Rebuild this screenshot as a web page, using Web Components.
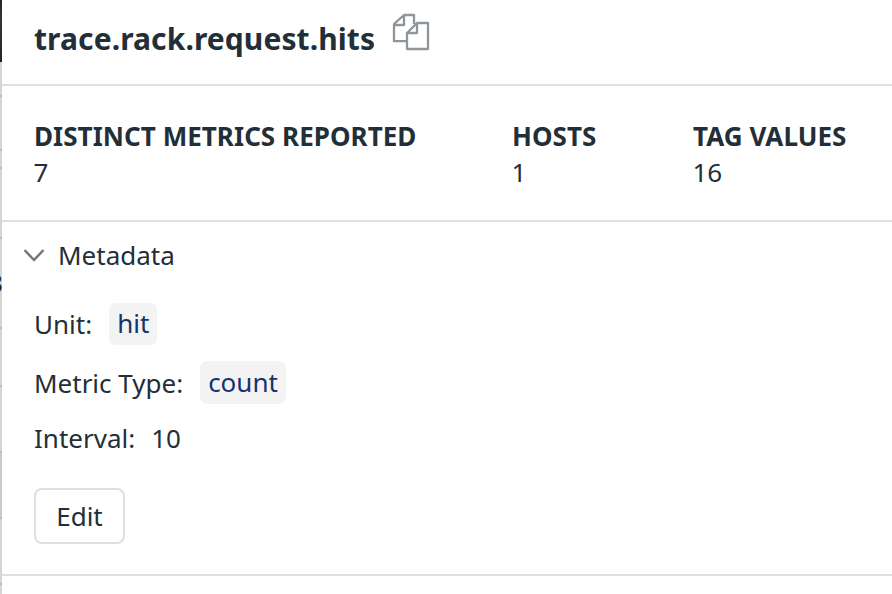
<!DOCTYPE html>
<html lang="en"><head><meta charset="utf-8"><title>Metric details</title>
<style>
html,body{margin:0;height:100%;overflow:hidden;background:#fff}
body{font:26px/36px "Noto Sans",sans-serif;color:#232f38}
</style></head><body>
<metric-app></metric-app>
<script>
const define=(name,html)=>customElements.define(name,class extends HTMLElement{
  constructor(){super();this.attachShadow({mode:'open'}).innerHTML=html}
});
define('page-edge',`<style>
:host{display:block;position:relative;overflow:hidden;width:2px;height:594px;background:#d4d4d4}
.dark{height:62px;background:linear-gradient(#242428,#343439 30%,#242428)}
i{position:absolute;left:0;width:2px;height:2px;background:#bcbcbf}
.sel{position:absolute;top:453px;width:2px;height:64px;background:#c5cdd2}
.num{position:absolute;top:265px;right:-.5px;font-weight:700;font-size:25px;color:#1b262e}
</style><div class="dark"></div><div class="sel"></div>
<i style="top:95px"></i><i style="top:149px"></i><i style="top:167px"></i><i style="top:237px"></i><i style="top:327px"></i><i style="top:385px"></i><i style="top:451px"></i><i style="top:517px"></i><i style="top:583px"></i>
<span class="num">3</span>`);
define('copy-icon',`<style>:host{display:block;width:38px;height:38px}svg{display:block}</style>
<svg width="38" height="38" fill="none" stroke="#8f969b" stroke-width="2.3" stroke-linejoin="round"><path d="M14 28.2H2V11L12 2H22V11M12 2V12H2M15 20L25 10H36V36H15ZM25 10V20H15"/></svg>`);
define('panel-header',`<style>
:host{display:flex;box-sizing:border-box;height:86px;padding:13px 0 0 32px;border-bottom:2px solid #dedee3}
h1{flex:none;width:341px;margin:6px 17px 0 0;font-size:30px;line-height:40px;font-weight:700;letter-spacing:.09px;white-space:nowrap}
</style><h1><slot></slot></h1><copy-icon></copy-icon>`);
define('metric-stat',`<style>:host{display:block;white-space:nowrap}b{display:block;font-weight:700;letter-spacing:.05px}.value{margin-left:-.5px}</style><b><slot name="label"></slot></b><div class="value"><slot></slot></div>`);
define('stat-row',`<style>:host{display:grid;grid-template-columns:478px 181px 1fr;box-sizing:border-box;height:136px;padding:32px 0 0 32px;border-bottom:2px solid #dedee3}</style><slot></slot>`);
define('section-title',`<style>:host{display:flex;align-items:center;padding-left:21px;gap:13px;height:36px}svg{display:block}</style>
<svg width="22" height="14" fill="none" stroke="#71787e" stroke-width="2.5"><path d="M1.5 2L11 12L20.5 2"/></svg><slot></slot>`);
define('value-tag',`<style>:host{display:block;box-sizing:border-box;height:42px;padding:2px 8px;border-radius:7px;background:#f3f3f4;color:#16336f}</style><slot></slot>`);
define('detail-row',`<style>:host{display:flex;height:42px;align-items:flex-start;gap:17px}span{padding-top:3px}</style><span><slot name="label"></slot></span><slot></slot>`);
define('edit-button',`<style>:host{display:block;width:91px;height:56px}button{display:block;width:91px;height:56px;margin:0;padding:0;border:2px solid #dedee3;border-radius:8px;background:#fff;color:inherit;font:inherit}</style><button><slot></slot></button>`);
define('metadata-section',`<style>:host{display:block;box-sizing:border-box;height:354px;padding-top:15px;border-bottom:2px solid #dedee3}.body{padding:30px 0 0 32px}</style><slot name="title"></slot><div class="body"><slot></slot></div>`);
define('metric-app',`<style>
:host{display:grid;grid-template-columns:2px 890px;height:594px}
.unit{margin-bottom:17px}.type{margin-bottom:13px}.interval{margin-bottom:29px;gap:16px}
.type value-tag{height:43px;margin-top:-1px;padding-top:3px}
</style><page-edge></page-edge><main>
<panel-header>trace.rack.request.hits</panel-header>
<stat-row><metric-stat><span slot="label">DISTINCT METRICS REPORTED</span>7</metric-stat><metric-stat><span slot="label">HOSTS</span>1</metric-stat><metric-stat><span slot="label">TAG VALUES</span>16</metric-stat></stat-row>
<metadata-section><section-title slot="title">Metadata</section-title>
<detail-row class="unit"><span slot="label">Unit:</span><value-tag>hit</value-tag></detail-row>
<detail-row class="type"><span slot="label">Metric Type:</span><value-tag>count</value-tag></detail-row>
<detail-row class="interval"><span slot="label">Interval:</span><span style="padding-top:3px">10</span></detail-row>
<edit-button>Edit</edit-button></metadata-section></main>`);
</script></body></html>
